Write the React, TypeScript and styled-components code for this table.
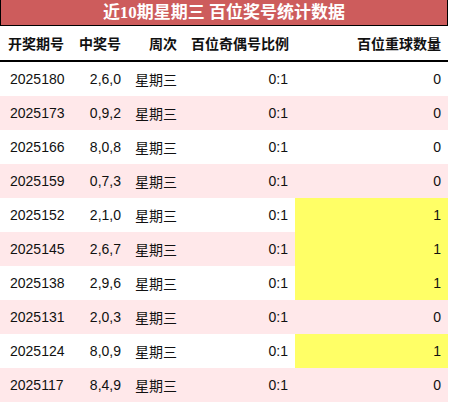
import styled, { createGlobalStyle } from "styled-components";

const GlobalStyle = createGlobalStyle`
  body {
    margin: 0;
    background: #ffffff;
    font-family: "Liberation Sans", "Noto Sans CJK SC", sans-serif;
  }
`;

type Row = { issue: string; nums: string; week: string; ratio: string; repeat: number };

const rows: Row[] = [
  { issue: "2025180", nums: "2,6,0", week: "星期三", ratio: "0:1", repeat: 0 },
  { issue: "2025173", nums: "0,9,2", week: "星期三", ratio: "0:1", repeat: 0 },
  { issue: "2025166", nums: "8,0,8", week: "星期三", ratio: "0:1", repeat: 0 },
  { issue: "2025159", nums: "0,7,3", week: "星期三", ratio: "0:1", repeat: 0 },
  { issue: "2025152", nums: "2,1,0", week: "星期三", ratio: "0:1", repeat: 1 },
  { issue: "2025145", nums: "2,6,7", week: "星期三", ratio: "0:1", repeat: 1 },
  { issue: "2025138", nums: "2,9,6", week: "星期三", ratio: "0:1", repeat: 1 },
  { issue: "2025131", nums: "2,0,3", week: "星期三", ratio: "0:1", repeat: 0 },
  { issue: "2025124", nums: "8,0,9", week: "星期三", ratio: "0:1", repeat: 1 },
  { issue: "2025117", nums: "8,4,9", week: "星期三", ratio: "0:1", repeat: 0 },
];

const App = () => {
  return (
    <>
      <GlobalStyle />
      <Wrapper>
        <Title>近10期星期三 百位奖号统计数据</Title>
        <Table>
          <colgroup>
            <col style={{ width: 70 }} />
            <col style={{ width: 58 }} />
            <col style={{ width: 56 }} />
            <col style={{ width: 111 }} />
            <col style={{ width: 153 }} />
          </colgroup>
          <thead>
            <tr>
              <Th $align="left" $lead>开奖期号</Th>
              <Th>中奖号</Th>
              <Th>周次</Th>
              <Th>百位奇偶号比例</Th>
              <Th>百位重球数量</Th>
            </tr>
          </thead>
          <tbody>
            {rows.map((r, i) => (
              <Tr key={r.issue} $odd={i % 2 === 1}>
                <Td $align="left" $lead>{r.issue}</Td>
                <Td>{r.nums}</Td>
                <Td $align="left">{r.week}</Td>
                <Td>{r.ratio}</Td>
                <Td $hit={r.repeat > 0}>{r.repeat}</Td>
              </Tr>
            ))}
          </tbody>
        </Table>
      </Wrapper>
    </>
  );
};

const Wrapper = styled.div`
  width: 448px;
`;

const Title = styled.div`
  height: 25px;
  line-height: 25px;
  background-color: #cd5c5c;
  border: 1px solid #000;
  border-top: none;
  color: #fff;
  font-family: "Liberation Serif", "Noto Sans CJK SC", serif;
  font-weight: bold;
  font-size: 17px;
  text-align: center;
`;

const Table = styled.table`
  width: 448px;
  border-collapse: collapse;
  table-layout: fixed;
`;

const Th = styled.th<{ $align?: string; $lead?: boolean }>`
  height: 34px;
  padding: 0 7px 0 ${p => (p.$lead ? "8px" : "7px")};
  border-bottom: 2px solid #000;
  font-family: "Liberation Sans", "Noto Sans CJK SC", sans-serif;
  font-size: 14px;
  font-weight: bold;
  color: #111;
  text-align: ${p => p.$align || "right"};
  white-space: nowrap;
`;

const Tr = styled.tr<{ $odd: boolean }>`
  background-color: ${p => (p.$odd ? "#ffe8ea" : "#ffffff")};
`;

const Td = styled.td<{ $align?: string; $hit?: boolean; $lead?: boolean }>`
  height: 34px;
  padding: 0 7px 0 ${p => (p.$lead ? "10px" : "7px")};
  font-size: 14px;
  color: #111;
  text-align: ${p => p.$align || "right"};
  white-space: nowrap;
  background-color: ${p => (p.$hit ? "#ffff66" : "transparent")};
`;

export default App;
